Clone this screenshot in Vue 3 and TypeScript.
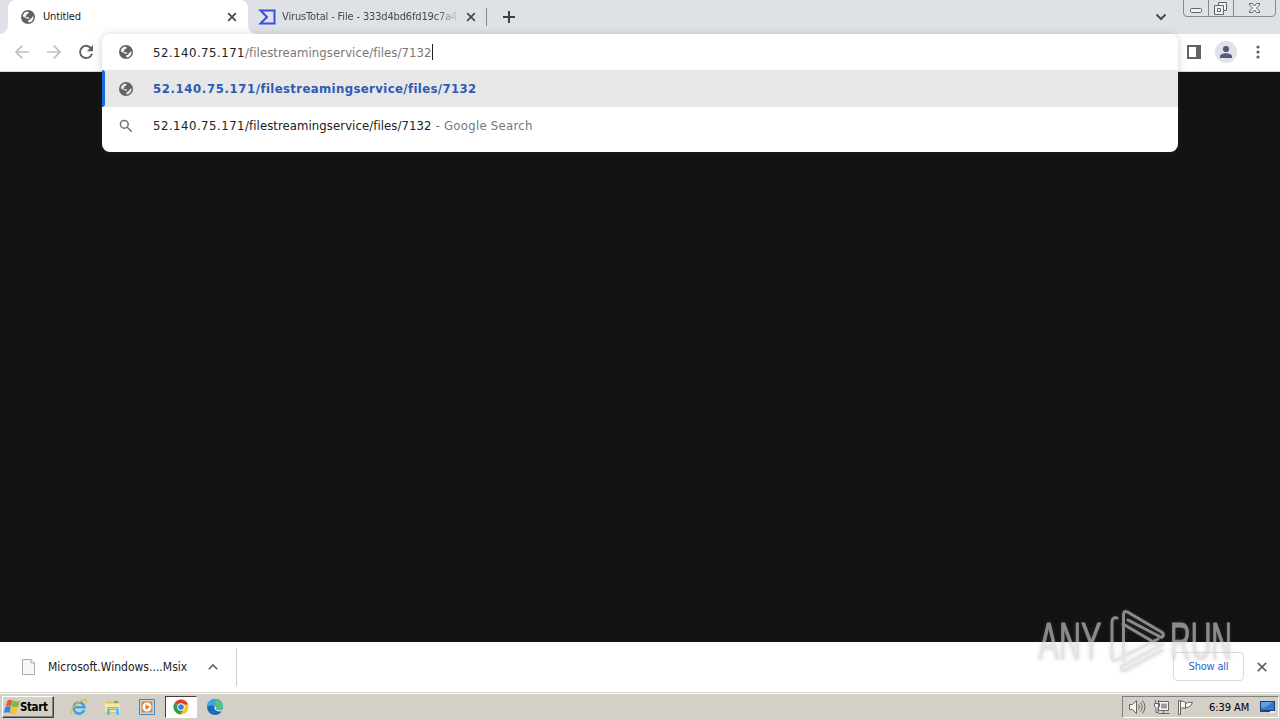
<script setup lang="ts">
const host = '52.140.75.171'
const path = '/filestreamingservice/files/7132'
const globe =
  'M8 1a7 7 0 1 0 0 14A7 7 0 0 0 8 1zM2.700 7.300C3 4.700 5 2.700 7.600 2.600l1 .7-.4 1.500-1.600.3-.2 1.600-1.300.4 1.200 1.200h2.300l.6 1.500H7.600L5.500 8.700zM8.200 13.400l.2-2.100 1.800-.5.6-1.600 1.100-.2.2-1.300 1.300-.3c.4 3.200-1.900 5.900-5.200 6z'
</script>

<template>
  <div class="desktop">
    <header class="tabs">
      <div class="tab active">
        <svg class="globe" viewBox="0 0 16 16"><path :d="globe" /></svg>
        <span class="tab-title first">Untitled</span>
        <svg class="close" viewBox="0 0 10 10"><path d="M1.200 1.200l7.600 7.600M8.800 1.200L1.200 8.800" /></svg>
      </div>
      <div class="tab second">
        <svg class="vt" viewBox="0 0 17 16"><path d="M1.500 1.500H15.500V14.500H1.500L8 8Z" /></svg>
        <span class="tab-title fade">VirusTotal - File - 333d4bd6fd19c7a4</span>
        <svg class="close" viewBox="0 0 10 10"><path d="M1.200 1.200l7.600 7.600M8.800 1.200L1.200 8.800" /></svg>
      </div>
      <i class="tab-separator"></i>
      <svg class="plus" viewBox="0 0 12 12"><path d="M6 0v12M0 6h12" /></svg>
      <svg class="tab-search" viewBox="0 0 12 8"><path d="M1.500 1.500L6 6l4.500-4.500" /></svg>
      <svg class="window-controls" viewBox="0 0 94 18">
        <path class="frame" d="M.5 0v13q0 3.500 3.500 3.500h85q3.500 0 3.500-3.500V0M25.500 0v16M50.500 0v16" />
        <rect class="glyph" x="7.500" y="8.500" width="11" height="4" rx="1" />
        <path class="glyph" d="M35.500 2.500h8v8h-3v4h-9v-9h4z" />
        <path class="glyph" d="M35.500 5.500h5v5M34.500 8.500h3v3h-3z" />
        <path class="glyph" d="M66.500 3.500h3l2 2.500 2-2.500h3v1.500l-3 3 3 3v1.500h-3l-2-2.500-2 2.500h-3V11l3-3-3-3z" />
      </svg>
    </header>

    <nav class="toolbar">
      <svg class="nav-icon muted" viewBox="0 0 16 16"><path d="M15 8H2M8.300 1.700L2 8l6.300 6.300" /></svg>
      <svg class="nav-icon muted" viewBox="0 0 16 16"><path d="M1 8h13M7.700 1.700L14 8l-6.300 6.300" /></svg>
      <svg class="nav-icon" viewBox="0 0 16 16"><path d="M13.600 5.200A6.100 6.100 0 1 0 14 9.700" /><path class="solid" d="M15 1v6.200H8.800z" /></svg>
      <div class="toolbar-right">
        <svg class="panel-icon" viewBox="0 0 14 14"><path d="M1 1h12v12H1z" /><path class="solid" d="M9 0h5v14H9z" /></svg>
        <svg class="avatar" viewBox="0 0 22 22"><circle class="disc" cx="11" cy="11" r="11" /><circle cx="11" cy="8" r="3.100" /><path d="M5 17v-1.500c0-2.100 3.500-3.200 6-3.200s6 1.100 6 3.200V17z" /></svg>
        <svg class="dots" viewBox="0 0 4 14"><circle cx="2" cy="2" r="1.600" /><circle cx="2" cy="7" r="1.600" /><circle cx="2" cy="12" r="1.600" /></svg>
      </div>
    </nav>

    <section class="omnibox">
      <div class="row input">
        <svg class="globe" viewBox="0 0 16 16"><path :d="globe" /></svg>
        <span class="address"><span class="host">{{ host }}</span><span class="gray">{{ path }}</span></span><i class="caret"></i>
      </div>
      <div class="row selected">
        <svg class="globe" viewBox="0 0 16 16"><path :d="globe" /></svg>
        <b class="match"><span class="match-host">{{ host }}</span>{{ path }}</b>
      </div>
      <div class="row">
        <svg class="search" viewBox="0 0 14 14"><circle cx="5.300" cy="5.300" r="3.900" /><path d="M8.200 8.200l4.600 4.600" /></svg>
        <span class="address"><span class="host">{{ host }}</span>{{ path }}</span><span class="hint">- Google Search</span>
      </div>
    </section>

    <main class="page"></main>

    <footer class="downloads">
      <svg class="file" viewBox="0 0 13 16"><path d="M.5.5h8.500l3.500 3.500v11.500H.5z" /><path d="M9 .5V4h3.500" /></svg>
      <span class="filename">Microsoft.Windows....Msix</span>
      <svg class="chevron" viewBox="0 0 10 6"><path d="M.8 5.200L5 1l4.200 4.200" /></svg>
      <i class="download-separator"></i>
      <button class="show-all"><span>Show all</span></button>
      <svg class="shelf-close" viewBox="0 0 10 10"><path d="M.8.8l8.400 8.400M9.200.8L.8 9.200" /></svg>
    </footer>

    <footer class="taskbar">
      <div class="start">
        <svg class="flag-logo" viewBox="0 0 16 16">
          <path fill="#e5602e" d="M3.500 1.500q2.500-1.500 5-.3L7.200 7.200Q4.300 6 1.600 7.700z" />
          <path fill="#7eb83e" d="M9 1.600q3.500 1.700 7-.2l-1.800 6q-3.500 1.700-6.500 0z" />
          <path fill="#3487d0" d="M1.300 8.200Q4 6.500 7 7.800L5.500 13.800Q2.500 12.500-.2 14z" />
          <path fill="#f4c62b" d="M7.500 8.200q3 1.700 6.500 0l-1.700 6q-3.300 1.700-6.400 0z" />
        </svg>
        <b>Start</b>
      </div>
      <div class="launchers">
        <svg class="ie" viewBox="0 0 18 18">
          <path d="M14.200 12A5.500 5.500 0 1 1 14.500 9.300H5" fill="none" stroke="#3aa3e0" stroke-width="2.600" />
          <path d="M2.500 15.800C-.8 15.500 2 9.500 7.500 5.300S17.500.3 16.200 4.500" fill="none" stroke="#e8bd37" stroke-width="1.400" />
        </svg>
        <svg class="explorer" viewBox="0 0 18 18">
          <path fill="#e6c75e" d="M2 3h5l1 1.500h7V15H2z" /><path fill="#f8e79a" d="M1 5.500h14l1 1V14H1z" />
          <path fill="#6bb052" d="M10 3h4v2h-4z" /><path fill="#68b9e5" d="M3 17v-6q0-2 2-2h8q2 0 2 2v6h-3v-5H6v5z" />
          <path fill="#a9daf0" d="M4 11q0-1 1-1h8q1 0 1 1z" />
        </svg>
        <svg class="media" viewBox="0 0 18 18">
          <path fill="#b9dcf2" stroke="#3989c9" d="M1.500 1.500h15v15h-15z" /><path fill="#ef831d" d="M3.500 3.500h11v11h-11z" />
          <circle cx="9" cy="9" r="4.500" fill="#fff" /><path fill="#ee7d18" d="M7.500 6l4.500 3-4.500 3z" />
        </svg>
        <div class="chrome-button">
          <svg viewBox="0 0 16 16">
            <circle cx="8" cy="8" r="7.500" fill="#f9c623" />
            <path d="M8 8L1.500 4.250A7.500 7.500 0 0 1 14.500 4.250L15 5.500H8z" fill="#df4032" />
            <path d="M1.500 4.250A7.500 7.500 0 0 0 7.600 15.500L11 9.700 8 8z" fill="#2b9f50" />
            <circle cx="8" cy="8" r="3.700" fill="#fff" /><circle cx="8" cy="8" r="2.800" fill="#3b7de0" />
          </svg>
        </div>
        <svg class="edge" viewBox="0 0 18 18">
          <circle cx="9" cy="9" r="8" fill="#1769b7" />
          <path fill="#36a9e1" d="M1 9a8 8 0 0 1 16-.5c0 2-1.500 3.500-4 3.500H9c2-2-1-5-4-4.500-2 .3-3.500 1.500-4 1.500z" />
          <path fill="#58c66c" d="M10 2q6 1 7 6.500-.5 3.500-4 3.500h-2q2-4-2-6z" />
          <path fill="#e0ecef" d="M9 8q-2 3 2 5 3 1 5.500-.5l.8-1.500q-2 1.500-5.300 1H10q1.500-2-1-4z" />
        </svg>
      </div>
      <div class="tray">
        <svg class="tray-icons" viewBox="0 0 68 18">
          <g class="tray-lines">
            <path d="M1.500 6.500h3l4-4v13l-4-4h-3z" />
            <path fill="none" d="M10.500 6.500q2 2.500 0 5M12.500 4.500q3.500 4.500 0 9M14.500 2.500q5 6.500 0 13" />
            <path d="M30.500 3.500h10v9h-10zM30.500 15.500h11M35.500 12.500v3M27.500 2v3M30.500 2v3M26.500 5.500h5v3l-1.500 1v5h-2v-5l-1.500-1z" />
            <path class="screen" d="M33 5.500h6v5h-6z" />
            <path d="M50.500 2.500h2v14h-2zM52.500 3.500q3-1 5 1v6q-2-1.500-5 0M57.500 5.500q3-2 7-1-1 1.500-2 3.500-1.500 1.500-5 1.500" />
          </g>
        </svg>
        <span class="time">6:39 AM</span>
        <svg class="desktop-icon" viewBox="0 0 16 14"><path fill="#203b73" d="M0 1h15v10H0z" /><path fill="#3479cd" d="M1 2h13v8H1z" /><path fill="#5f9fe6" d="M1 2h11Q8 7 1 8z" /><path fill="#e9eef4" d="M10 11h5v2h-5z" /><path fill="#26467c" d="M0 11h10v1H0z" /></svg>
      </div>
    </footer>

    <svg class="watermark" viewBox="0 0 220 80">
      <g class="brand">
        <text x="18.500" y="59" textLength="63" lengthAdjust="spacingAndGlyphs">ANY</text>
        <text x="150" y="59" textLength="62" lengthAdjust="spacingAndGlyphs">RUN</text>
        <path d="M97 18q-5-1-5 4V57q0 5 4.500 3L138 39M103.500 60V15q0-5 4-3l34 20q4 3 0 5.500L108 20M103 24l34 20M143 44l-39 21q-4 2.500-2 5 2 1.500 5-.5l35-19" />
      </g>
    </svg>
  </div>
</template>

<style>
html, body { overflow: hidden; }
</style>

<style scoped>
* { box-sizing: border-box; }
svg { display: block; flex: none; overflow: visible; fill: none; stroke: none; }
.desktop { position: relative; width: 1280px; height: 720px; background: #121212; overflow: hidden; display: flex; flex-direction: column; font-family: "DejaVu Sans Condensed", "DejaVu Sans", sans-serif; font-stretch: condensed; color: #202124; }
.tabs { height: 34px; background: #dee1e6; display: flex; align-items: flex-start; padding-left: 8px; flex: none; }
.tab { height: 34px; width: 240px; display: flex; align-items: center; position: relative; }
.active { background: #fff; border-radius: 8px 8px 0 0; padding-left: 12px; }
.active::before, .active::after { content: ""; position: absolute; bottom: 0; width: 8px; height: 8px; }
.active::before { left: -8px; background: radial-gradient(circle at 0 0, transparent 7.500px, #fff 8px); }
.active::after { right: -8px; background: radial-gradient(circle at 100% 0, transparent 7.500px, #fff 8px); }
.globe { width: 16px; height: 16px; fill: #5f6368; }
.tab-title { font-size: 11px; white-space: nowrap; line-height: 16px; overflow: hidden; margin-left: 7px; width: 180px; letter-spacing: -.15px; }
.tab-title.first { width: 184px; }
.close { width: 10px; height: 10px; stroke: #45494d; stroke-width: 1.700; }
.second { width: 238px; padding-left: 11px; }
.vt { width: 17px; height: 16px; stroke: #394fe0; stroke-width: 2; }
.fade { width: 176px; margin: 0 8px 0 6px; color: #45484d; mask-image: linear-gradient(90deg, #000 154px, transparent 178px); }
.tab-separator { width: 1px; height: 18px; margin-top: 8px; background: #85898f; }
.plus { width: 12px; height: 12px; margin: 11px 0 0 16px; stroke: #3c4043; stroke-width: 2; }
.tab-search { width: 12px; height: 8px; margin: 13px 16px 0 auto; stroke: #45494d; stroke-width: 2; }
.window-controls { width: 94px; height: 18px; margin-right: 3px; }
.frame { stroke: #868a91; stroke-width: 1; }
.glyph { fill: #f1f2f4; stroke: #62656c; stroke-width: 1; }
.toolbar { height: 38px; flex: none; background: #fff; border-bottom: 1px solid #d9dadd; display: flex; align-items: center; padding: 0 20px 1px 14px; gap: 16px; }
.nav-icon { width: 16px; height: 16px; stroke: #5f6368; stroke-width: 2; }
.muted { stroke: #bdc0c3; stroke-width: 1.700; }
.solid { fill: #5f6368; stroke: none; }
.toolbar-right { display: flex; align-items: center; margin-left: auto; }
.panel-icon { width: 14px; height: 14px; stroke: #5f6368; stroke-width: 2; }
.avatar { width: 22px; height: 22px; margin-left: 14px; fill: #505d7a; }
.disc { fill: #dfe2e8; }
.dots { width: 4px; height: 14px; margin-left: 19px; fill: #5f6368; }
.omnibox { position: absolute; z-index: 2; left: 102px; top: 34px; width: 1076px; height: 118px; background: #fff; border-radius: 8px; overflow: hidden; box-shadow: 0 1px 9px rgba(60, 64, 67, .26); }
.row { height: 37px; display: flex; align-items: center; padding-left: 16px; white-space: nowrap; }
.input { height: 36px; }
.selected { background: #e7e7e7; position: relative; }
.selected::before { content: ""; position: absolute; left: 0; top: 0; width: 3px; height: 37px; background: #1a68d8; border-radius: 0 3px 3px 0; }
.address { margin-left: 19px; font-size: 13px; letter-spacing: .07px; color: #202124; }
.host { letter-spacing: .5px; }
.gray { color: #777; }
.caret { width: 1px; height: 16px; background: #202124; }
.match { margin-left: 19px; color: #2c5bb5; font-size: 13px; letter-spacing: .38px; }
.match-host { letter-spacing: .62px; }
.search { width: 14px; height: 14px; margin: 0 1px; stroke: #6e7276; stroke-width: 1.500; }
.hint { color: #777; font-size: 13px; letter-spacing: .27px; margin-left: 4px; }
.page { height: 570px; flex: none; background: #121212; }
.downloads { height: 50px; flex: none; background: #fff; display: flex; align-items: center; padding: 0 13px 0 22px; }
.file { width: 13px; height: 16px; fill: #f7f7f7; stroke: #aaa; }
.filename { width: 140px; margin-left: 13px; font-size: 12px; letter-spacing: .02px; white-space: nowrap; }
.chevron { width: 10px; height: 6px; margin-left: 20px; stroke: #5f6368; stroke-width: 1.600; }
.download-separator { width: 1px; height: 38px; background: #ccc; margin-left: 18px; }
.show-all { width: 71px; height: 29px; padding: 0; border: 1px solid #dadce0; border-radius: 4px; margin-left: auto; margin-bottom: 2px; background: transparent; color: #1f6ac8; font: 11px "DejaVu Sans Condensed", sans-serif; letter-spacing: -.2px; }
.shelf-close { width: 10px; height: 10px; margin-left: 13px; stroke: #5f6368; stroke-width: 1.700; }
.taskbar { height: 28px; flex: none; display: flex; align-items: center; background: #d4d0c8; border-top: 1px solid #d4d0c8; box-shadow: inset 0 1px #fff; padding: 1px 1px 0 2px; }
.start { width: 52px; height: 22px; border: 1px solid; border-color: #fff #404040 #404040 #fff; box-shadow: inset -1px -1px #808080; display: flex; align-items: center; padding-left: 1px; color: #000; }
.flag-logo { width: 16px; height: 16px; }
.start b { font-size: 11.500px; letter-spacing: -.4px; margin-left: 0; }
.launchers { display: flex; align-items: center; margin-left: 16px; gap: 16px; }
.launchers > svg { width: 18px; height: 18px; }
.chrome-button { width: 32px; height: 22px; display: grid; place-items: center; background: #fff; border: 1px solid; border-color: #404040 #fff #fff #404040; margin: 0 -7px; }
.chrome-button svg { width: 16px; height: 16px; }
.tray { width: 157px; height: 22px; border: 1px solid; border-color: #808080 #fff #fff #808080; margin-left: auto; display: flex; align-items: center; padding-left: 5px; }
.tray-icons { width: 68px; height: 18px; }
.tray-lines { stroke: #666; fill: #f7f6f3; stroke-width: 1; }
.tray-lines .screen { fill: #9b9b99; stroke: none; }
.time { font-size: 11px; letter-spacing: -.05px; width: 42px; margin-left: 13px; white-space: nowrap; color: #000; }
.desktop-icon { width: 16px; height: 14px; margin-left: 9px; }
.watermark { position: absolute; z-index: 3; left: 1020px; top: 600px; width: 220px; height: 80px; pointer-events: none; opacity: .62; filter: drop-shadow(0 0 2px rgba(120, 120, 120, .4)); }
.brand { fill: #d6d6d6; stroke: #d6d6d6; stroke-width: 1; }
.brand text { font: 51px "Liberation Sans", sans-serif; }
.brand path { fill: none; stroke-width: 3; stroke-linejoin: round; stroke-linecap: round; }
</style>
